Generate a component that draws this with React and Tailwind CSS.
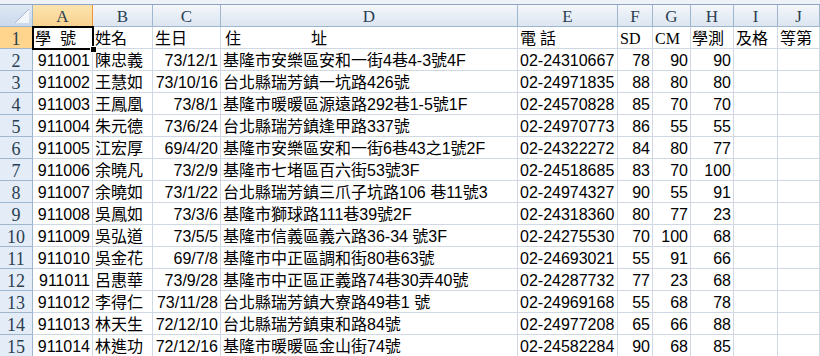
import React from "react";

const GRID =
  "grid grid-cols-[33px_60px_60px_68px_297px_100px_35px_38px_43px_44px_1fr]";

const SANS =
  "font-['Liberation_Sans_Narrow','Liberation_Sans','Noto_Sans_CJK_TC',sans-serif]";
const SERIF = "font-['Liberation_Serif','Noto_Sans_CJK_TC',serif]";

const BODY =
  "text-[16px] leading-[20px] pt-[2px] text-black whitespace-nowrap overflow-hidden";

const HEAD =
  "font-['Liberation_Serif','Noto_Sans_CJK_TC',serif] text-[17px] leading-[20px] pt-[2px] text-[#2a3f52] text-center";

const letters = ["A", "B", "C", "D", "E", "F", "G", "H", "I", "J"];

// right aligned columns: A, C, F, G, H
const alignRight = [true, false, true, false, false, true, true, true, false, false];

const data = [
  ["911001", "陳忠義", "73/12/1", "基隆市安樂區安和一街4巷4-3號4F", "02-24310667", "78", "90", "90"],
  ["911002", "王慧如", "73/10/16", "台北縣瑞芳鎮一坑路426號", "02-24971835", "88", "80", "80"],
  ["911003", "王鳳凰", "73/8/1", "基隆市暖暖區源遠路292巷1-5號1F", "02-24570828", "85", "70", "70"],
  ["911004", "朱元德", "73/6/24", "台北縣瑞芳鎮逢甲路337號", "02-24970773", "86", "55", "55"],
  ["911005", "江宏厚", "69/4/20", "基隆市安樂區安和一街6巷43之1號2F", "02-24322272", "84", "80", "77"],
  ["911006", "余曉凡", "73/2/9", "基隆市七堵區百六街53號3F", "02-24518685", "83", "70", "100"],
  ["911007", "余曉如", "73/1/22", "台北縣瑞芳鎮三爪子坑路106 巷11號3", "02-24974327", "90", "55", "91"],
  ["911008", "吳鳳如", "73/3/6", "基隆市獅球路111巷39號2F", "02-24318360", "80", "77", "23"],
  ["911009", "吳弘道", "73/5/5", "基隆市信義區義六路36-34 號3F", "02-24275530", "70", "100", "68"],
  ["911010", "吳金花", "69/7/8", "基隆市中正區調和街80巷63號", "02-24693021", "55", "91", "66"],
  ["911011", "呂惠華", "73/9/28", "基隆市中正區正義路74巷30弄40號", "02-24287732", "77", "23", "68"],
  ["911012", "李得仁", "73/11/28", "台北縣瑞芳鎮大寮路49巷1 號", "02-24969168", "55", "68", "78"],
  ["911013", "林天生", "72/12/10", "台北縣瑞芳鎮東和路84號", "02-24977208", "65", "66", "88"],
  ["911014", "林進功", "72/12/16", "基隆市暖暖區金山街74號", "02-24582284", "90", "68", "85"],
];

function RowHead({ n, selected }) {
  return (
    <div
      className={`h-[22px] border-b border-r ${HEAD} text-[18px] ${
        selected
          ? "bg-[#ffd58d] border-b-[#9eb6ce] border-r-[#f29436]"
          : "bg-[#e4ecf7] border-[#9eb6ce]"
      }`}
    >
      {n}
    </div>
  );
}

function Cell({ children, right, serif, pad }) {
  const font = serif ? SERIF : SANS;
  const align = right ? "text-right pr-[2px]" : pad || "text-left pl-[2px]";
  return (
    <div
      className={`h-[22px] border-b border-r border-[#d0d7e5] bg-white ${font} ${BODY} ${align}`}
    >
      {children}
    </div>
  );
}

export default function App() {
  return (
    <div className="w-[820px] h-[356px] overflow-hidden bg-white relative">
      {/* strip above the sheet */}
      <div className="h-[5px] bg-[#eef2f7] border-b border-[#8ea6c3]" />

      {/* column headers */}
      <div className={GRID}>
        <div className="h-[22px] border-r border-b border-[#9eb6ce] bg-gradient-to-b from-[#dfe8f4] to-[#cbd9ec] flex items-end justify-end pr-[3px] pb-[3px]">
          <svg width="14" height="14" viewBox="0 0 14 14">
            <polygon points="14,0 14,14 0,14" fill="#f2f5f9" />
            <line x1="14" y1="0" x2="0" y2="14" stroke="#a9bad0" strokeWidth="1" />
          </svg>
        </div>
        {letters.map((l, i) =>
          i === 0 ? (
            <div
              key={l}
              className={`h-[22px] border-r border-b border-[#f29436] bg-gradient-to-b from-[#fce4ae] to-[#f8d28f] ${HEAD}`}
            >
              {l}
            </div>
          ) : (
            <div
              key={l}
              className={`h-[22px] border-r border-b border-[#9eb6ce] bg-gradient-to-b from-[#f4f7fb] to-[#dce5f1] ${HEAD}`}
            >
              {l}
            </div>
          )
        )}
      </div>

      {/* row 1 : titles */}
      <div className={GRID}>
        <RowHead n={1} selected />
        <Cell>
          <span className="mr-[9px]">學</span>號
        </Cell>
        <Cell>姓名</Cell>
        <Cell>生日</Cell>
        <Cell pad="text-left pl-[4px]">
          <span>住</span>
          <span className="ml-[70px]">址</span>
        </Cell>
        <Cell>
          <span>電</span>
          <span className="ml-[4px]">話</span>
        </Cell>
        <Cell serif>SD</Cell>
        <Cell serif>CM</Cell>
        <Cell pad="text-left pl-[1px]">學測</Cell>
        <Cell>及格</Cell>
        <Cell>等第</Cell>
      </div>

      {/* data rows */}
      {data.map((row, r) => (
        <div key={r} className={GRID}>
          <RowHead n={r + 2} />
          {letters.map((l, c) => (
            <Cell key={l} right={alignRight[c]}>
              {row[c] || ""}
            </Cell>
          ))}
        </div>
      ))}

      {/* active cell A1 outline + fill handle */}
      <div className="absolute left-[32px] top-[26px] w-[62px] h-[24px] border-2 border-black pointer-events-none" />
      <div className="absolute left-[90px] top-[46px] w-[7px] h-[7px] bg-black border border-white" />
    </div>
  );
}
